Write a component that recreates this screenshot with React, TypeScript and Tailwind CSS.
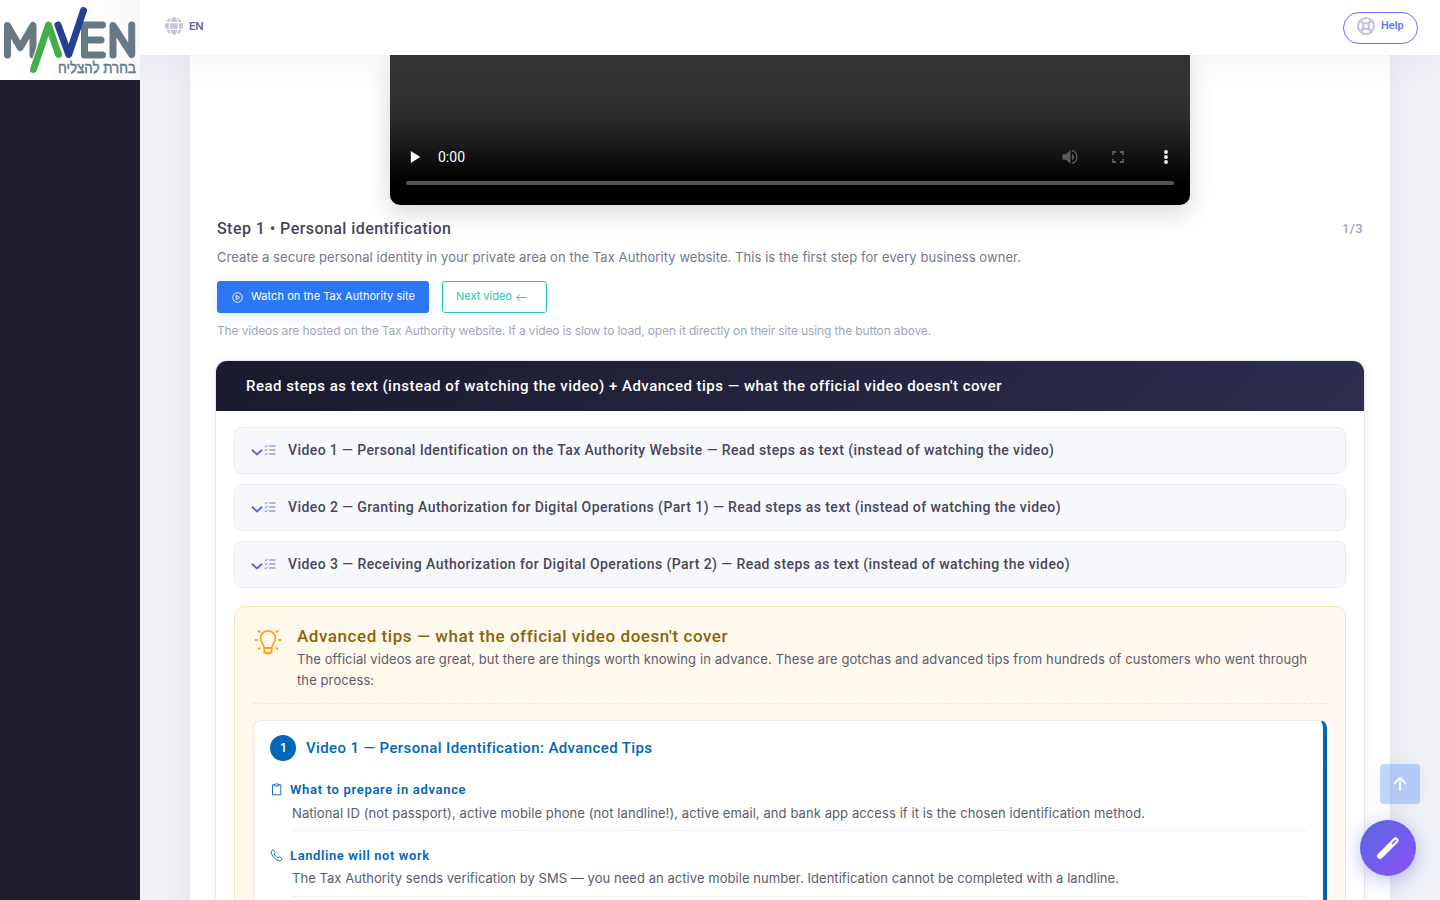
import type { ReactNode } from 'react';

const videos = [
  { text: 'Video 1 — Personal Identification on the Tax Authority Website — Read steps as text (instead of watching the video)', spacing: 'tracking-[0.408px]' },
  { text: 'Video 2 — Granting Authorization for Digital Operations (Part 1) — Read steps as text (instead of watching the video)', spacing: 'tracking-[0.417px]' },
  { text: 'Video 3 — Receiving Authorization for Digital Operations (Part 2) — Read steps as text (instead of watching the video)', spacing: 'tracking-[0.427px]' },
];

function Logo() {
  return (
    <svg width="140" height="80" viewBox="0 0 140 80" fill="none" strokeWidth="7" strokeLinecap="round" strokeLinejoin="round">
      <g stroke="#667985">
        <path d="M7.5 55V25.5L20.2 47.5L33 25.5V55" />
        <path d="M102.5 25H84.5V55H102.5M84.5 40H101" />
        <path d="M113 55V25.5L131.7 54.5V25" />
      </g>
      <path d="M33.5 69.5L48.5 25L58.5 54.5" stroke="#fff" strokeWidth="9" />
      <path d="M33.5 69.5L48.5 25L58.5 54.5" stroke="#41b049" />
      <path d="M58 25L68.8 54.5L83.5 10.5" stroke="#25408f" />
      <text x="136" y="73" direction="rtl" textLength="78" lengthAdjust="spacingAndGlyphs" fill="#667985" stroke="#667985" strokeWidth="0.5" className="font-['Liberation_Sans',sans-serif] text-[15.5px]">
        בחרת להצליח
      </text>
    </svg>
  );
}

function Globe() {
  return (
    <svg width="20" height="20" viewBox="0 0 20 20" className="shrink-0">
      <circle cx="10" cy="10" r="9" fill="#c4c4df" />
      <g fill="none" stroke="#fff" strokeWidth="1.2">
        <path d="M1 6.7H19M1 13.3H19" />
        <ellipse cx="10" cy="10" rx="4.5" ry="9.6" />
      </g>
    </svg>
  );
}

function LifeBuoy() {
  return (
    <svg width="20" height="20" viewBox="0 0 20 20" fill="none" stroke="#c4c4df" className="shrink-0">
      <circle cx="10" cy="10" r="8" strokeWidth="2.2" />
      <circle cx="10" cy="10" r="3" strokeWidth="2.2" />
      <path d="M4 4L8 8M16 4L12 8M4 16L8 12M16 16L12 12" strokeWidth="2.6" />
    </svg>
  );
}

function ListIcon() {
  return (
    <svg width="12" height="12" viewBox="0 0 12 12" fill="none" stroke="#5867dd" strokeWidth="0.9" className="shrink-0">
      <path d="M5 2H11.5M5 6H11.5M5 10H11.5" />
      <path d="M0.7 2L1.6 2.9L3.4 1M0.7 6L1.6 6.9L3.4 5M0.7 10L1.6 10.9L3.4 9" />
    </svg>
  );
}

function Bulb() {
  return (
    <svg width="28" height="28" viewBox="0 0 28 28" fill="none" stroke="#f9a11b" strokeWidth="1.8" className="mt-[4px] ml-px shrink-0">
      <path d="M10.3 20C10.3 16.3 6.6 15.3 6.6 10.2A7.4 7.4 0 0 1 21.4 10.2C21.4 15.3 17.7 16.3 17.7 20Z" />
      <path d="M10.3 20V24.6H17.7V20M12.3 25.7H15.7M0.8 12H3.7M24.3 12H27.2M4 2.5L6.1 4.5M24 2.5L21.9 4.5M4 21.5L6.1 19.5M24 21.5L21.9 19.5" />
    </svg>
  );
}

function Tip({ icon, title, titleClass, textClass, className, children }: { icon: ReactNode; title: string; titleClass: string; textClass: string; className: string; children: ReactNode }) {
  return (
    <div className={className}>
      <div className="flex h-5 items-center">
        <span className="flex w-5 shrink-0">{icon}</span>
        <h4 className={`pt-px font-['Roboto',sans-serif] text-[13px] font-semibold whitespace-nowrap text-[#0067b8] ${titleClass}`}>{title}</h4>
      </div>
      <p className={`ml-[22px] border-b border-[#f0f1f6] text-[13px] whitespace-nowrap text-[#595d6e] ${textClass}`}>{children}</p>
    </div>
  );
}

export default function App() {
  return (
    <div className="relative flex h-[900px] w-full overflow-hidden bg-[#f0f1f7] font-['Inter',sans-serif]">
      <aside className="z-20 flex w-[140px] shrink-0 flex-col bg-[#1e1e2d]">
        <div className="h-20 bg-gradient-to-r from-white from-60% to-[#f8f8fb]">
          <Logo />
        </div>
      </aside>

      <div className="flex min-w-0 flex-1 flex-col">
        <header className="z-10 flex h-[55px] shrink-0 items-center justify-between bg-white pr-[22px] pl-[24px] shadow-[0_0_40px_rgba(82,63,105,0.08)]">
          <button className="flex items-center gap-[5px] pb-[3px] text-[11px] font-semibold tracking-[-0.5px] text-[#636199]">
            <Globe />
            EN
          </button>
          <button className="flex h-8 w-[75px] items-center rounded-full border border-[#5d78ff] pb-[3px] pl-[12px] text-[11px] font-semibold text-[#5d78ff]">
            <LifeBuoy />
            <span className="ml-[5px] font-['Roboto',sans-serif]">Help</span>
          </button>
        </header>

        <main className="h-[845px] px-[50px]">
          <div className="h-[900px] bg-white px-[25px] shadow-[0_0_30px_rgba(82,63,105,0.08)]">
            <div className="mx-auto flex h-[150px] w-[800px] flex-col justify-end rounded-b-[10px] bg-[linear-gradient(to_bottom,#333_0%,#333_22%,#2b2b2b_42%,#1a1a1a_60%,#080808_76%,#000_87%)] px-4 pb-5 shadow-[0_8px_24px_rgba(0,0,0,0.16)]">
              <div className="flex h-8 items-center pl-[4px] text-white">
                <svg width="11" height="12" viewBox="0 0 11 12" fill="#fff"><path d="M0.8 0V12L10.3 6Z" /></svg>
                <span className="ml-[17px] pt-px font-['Roboto',sans-serif] text-[14px]">0:00</span>
                <svg width="18" height="18" viewBox="0 0 18 18" fill="#5a5a5a" className="ml-auto">
                  <path d="M1.5 6.2H5L9.5 2V16L5 11.8H1.5ZM11 5.5A4 4 0 0 1 11 12.5ZM11 1.8A7.5 7.5 0 0 1 11 16.2V14.7A6 6 0 0 0 11 3.3Z" />
                </svg>
                <svg width="12" height="12" viewBox="0 0 12 12" fill="none" stroke="#5a5a5a" strokeWidth="1.8" className="ml-[33px]">
                  <path d="M1 4V1H4M8 1H11V4M11 8V11H8M4 11H1V8" />
                </svg>
                <svg width="4" height="14" viewBox="0 0 4 14" fill="#fff" className="mr-[6px] ml-[40px]">
                  <circle cx="2" cy="2" r="1.9" /><circle cx="2" cy="7" r="1.9" /><circle cx="2" cy="12" r="1.9" />
                </svg>
              </div>
              <div className="mt-2 h-1 rounded-full bg-[#545454]" />
            </div>

            <div className="mt-3 flex h-6 items-center justify-between px-[2px]">
              <h2 className="font-['Roboto',sans-serif] text-[16px] font-medium tracking-[0.434px] text-[#48465b]">Step 1 • Personal identification</h2>
              <span className="font-['Roboto',sans-serif] text-[13px] font-medium tracking-[0.4px] text-[#a2a5b9]">1/3</span>
            </div>
            <p className="mt-[6px] h-5 px-[2px] text-[13px] leading-5 tracking-[0.067px] whitespace-nowrap text-[#74788d]">
              Create a secure personal identity in your private area on the Tax Authority website. This is the first step for every business owner.
            </p>
            <div className="mt-[14px] flex h-8 gap-[13px] px-[2px]">
              <button className="flex w-[212px] items-center rounded-[3px] bg-[#2c77f4] pb-px pl-[15px] text-[11px] tracking-[0.05px] whitespace-nowrap text-white shadow-[0_3px_12px_rgba(44,119,244,0.15)]">
                <svg width="11" height="11" viewBox="0 0 11 11" fill="none" stroke="#fff" strokeWidth="0.9" className="mt-[1px] mr-[8px]">
                  <circle cx="5.5" cy="5.5" r="4.8" /><path d="M4.2 3.4V7.6L7.7 5.5Z" />
                </svg>
                Watch on the Tax Authority site
              </button>
              <button className="flex w-[105px] items-center rounded-[3px] border border-[#1dc9b7] pb-px pl-[13px] text-[11px] whitespace-nowrap text-[#1dc9b7]">
                Next video
                <svg width="11" height="9" viewBox="0 0 11 9" fill="none" stroke="#1dc9b7" strokeWidth="0.9" className="mt-[2px] ml-[4px]">
                  <path d="M10.5 4.5H0.8M4.3 1L0.8 4.5L4.3 8" />
                </svg>
              </button>
            </div>
            <p className="mt-[9px] h-[18px] px-[2px] text-[12px] leading-[18px] tracking-[-0.138px] whitespace-nowrap text-[#a2a5b9]">
              The videos are hosted on the Tax Authority website. If a video is slow to load, open it directly on their site using the button above.
            </p>

            <section className="mt-5 h-[600px] overflow-hidden rounded-t-[12px] border border-[#e8eaf2] bg-white shadow-[0_2px_14px_rgba(40,40,80,0.06)]">
              <h3 className="flex h-[50px] items-center bg-[linear-gradient(135deg,#1a1a2e,#2d2d4d)] pl-[30px] font-['Roboto',sans-serif] text-[15px] font-medium tracking-[0.485px] text-white">
                Read steps as text (instead of watching the video) + Advanced tips — what the official video doesn't cover
              </h3>
              <div className="px-[18px] pt-4">
                <div className="flex flex-col gap-[10px]">
                  {videos.map((v) => (
                    <div key={v.text} className="flex h-[47px] items-center rounded-[8px] border border-[#e8eaf2] bg-[#f7f8fc] pb-px pl-[16px]">
                      <svg width="12" height="7" viewBox="0 0 12 7" fill="none" stroke="#5867dd" strokeWidth="1.9" className="mt-1 mr-px">
                        <path d="M0.9 0.8L6 5.5L11.1 0.8" />
                      </svg>
                      <ListIcon />
                      <span className={`ml-[12px] font-['Roboto',sans-serif] text-[14px] font-medium whitespace-nowrap text-[#48465b] ${v.spacing}`}>{v.text}</span>
                    </div>
                  ))}
                </div>

                <div className="mt-[18px] h-[500px] rounded-[10px] border border-[#ffe5b0] bg-[linear-gradient(135deg,#fff9ec,#fff8f2)] px-[18px] pt-[17px]">
                  <div className="flex h-[80px] gap-[15px] border-b border-dashed border-[#fbe8bb]">
                    <Bulb />
                    <div>
                      <h3 className="h-[25px] font-['Roboto',sans-serif] text-[17px] leading-[24px] font-medium tracking-[0.558px] text-[#8a6508]">Advanced tips — what the official video doesn't cover</h3>
                      <p className="text-[13px] leading-[21px] tracking-[0.094px] whitespace-nowrap text-[#595d6e]">
                        The official videos are great, but there are things worth knowing in advance. These are gotchas and advanced tips from hundreds of customers who went through
                        <br />
                        the process:
                      </p>
                    </div>
                  </div>

                  <div className="mt-4 h-[400px] rounded-[8px] border border-r-4 border-[#e8eaf2] border-r-[#0067b8] bg-white pt-[14px] pr-4 pl-4">
                    <div className="flex h-[26px] items-center gap-[10px]">
                      <span className="flex size-[26px] items-center justify-center rounded-full bg-[#0067b8] text-[12px] font-semibold text-white">1</span>
                      <h4 className="font-['Roboto',sans-serif] text-[15px] font-medium tracking-[0.381px] text-[#0067b8]">Video 1 — Personal Identification: Advanced Tips</h4>
                    </div>
                    <Tip
                      className="mt-[18px]"
                      title="What to prepare in advance"
                      titleClass="tracking-[0.68px]"
                      textClass="mt-[4px] h-[28px] leading-[21px] tracking-[0.087px]"
                      icon={
                        <svg width="13" height="13" viewBox="0 0 13 13" fill="none" stroke="#0067b8" strokeWidth="0.9">
                          <path d="M4.5 1.8H2.5V11.8H10.8V1.8H8.8M4.5 1.2H5.7L6.6 0.6L7.6 1.2H8.8V3H4.5Z" />
                        </svg>
                      }
                    >
                      National ID (not passport), active mobile phone (not landline!), active email, and bank app access if it is the chosen identification method.
                    </Tip>
                    <Tip
                      className="mt-[14px]"
                      title="Landline will not work"
                      titleClass="tracking-[0.6px]"
                      textClass="mt-[3px] h-[29px] leading-[21px] tracking-[0.052px]"
                      icon={
                        <svg width="13" height="13" viewBox="0 0 13 13" fill="none" stroke="#0067b8" strokeWidth="0.9" strokeLinejoin="round">
                          <path d="M1.4 2.2L3 0.8L5.2 3.4L4.1 4.9C4.8 6.5 6.4 8.1 8 8.8L9.5 7.7L12.1 9.7L10.9 11.5C9.8 12.5 7.2 11.7 4.4 9C1.6 6.3 0.7 3.5 1.4 2.2Z" />
                        </svg>
                      }
                    >
                      The Tax Authority sends verification by SMS — you need an active mobile number. Identification cannot be completed with a landline.
                    </Tip>
                  </div>
                </div>
              </div>
            </section>
          </div>
        </main>
      </div>

      <button className="absolute top-[764px] right-5 z-30 flex size-10 items-center justify-center rounded-[4px] bg-[#2c77f4]/30 shadow-[0_0_15px_rgba(82,63,105,0.06)]">
        <svg width="14" height="16" viewBox="0 0 14 16" fill="none" stroke="#f4f7fe" strokeWidth="2.2" strokeLinecap="round" strokeLinejoin="round">
          <path d="M7 14V2M1.8 7L7 1.8L12.2 7" />
        </svg>
      </button>
      <button className="absolute top-[820px] right-6 z-30 flex size-14 items-center justify-center rounded-full bg-gradient-to-br from-[#5867dd] to-[#8950fc] shadow-[0_4px_20px_rgba(88,103,221,0.4)]">
        <svg width="24" height="24" viewBox="0 0 24 24" fill="none" strokeLinecap="round">
          <path d="M4 20L19.5 4.5" stroke="#fff" strokeWidth="6" />
          <path d="M16.5 7.5L19.5 4.5" stroke="#7659ec" strokeWidth="1.6" />
        </svg>
      </button>
    </div>
  );
}
